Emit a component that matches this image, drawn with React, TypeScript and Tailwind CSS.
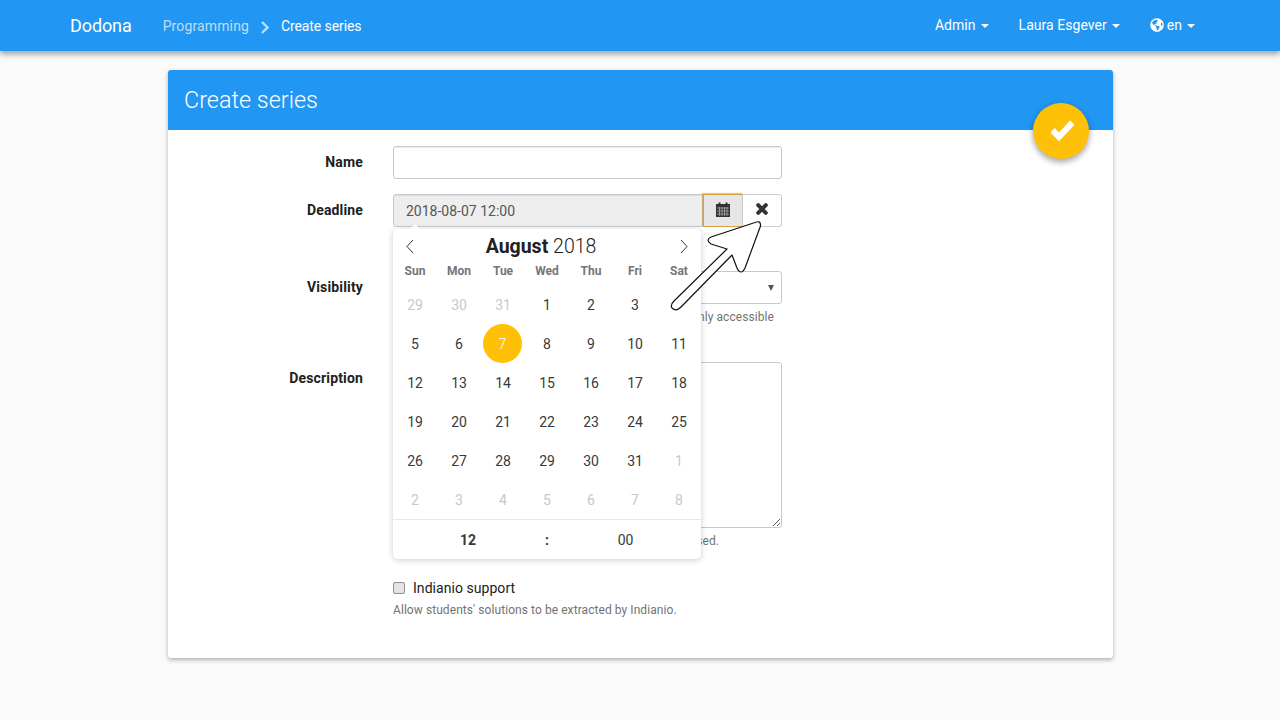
import React from "react";
import { FaGlobeAmericas } from "react-icons/fa";

const Caret = () => (
  <span className="ml-[5px] inline-block w-0 h-0 border-x-[4px] border-t-[4px] border-x-transparent border-t-white align-middle" />
);

const weeks = [
  [[29, 1], [30, 1], [31, 1], [1], [2], [3], [4, 3]],
  [[5], [6], [7, 2], [8], [9], [10], [11]],
  [[12], [13], [14], [15], [16], [17], [18]],
  [[19], [20], [21], [22], [23], [24], [25]],
  [[26], [27], [28], [29], [30], [31], [1, 1]],
  [[2, 1], [3, 1], [4, 1], [5, 1], [6, 1], [7, 1], [8, 1]],
];

function Calendar() {
  return (
    <div className="absolute left-0 top-[35px] z-10 w-[308px] h-[330px] bg-white rounded-[5px] shadow-[0_1px_6px_rgba(0,0,0,0.2)] flex flex-col">
      <div className="absolute -top-[5px] left-[17px] w-0 h-0 border-x-[5px] border-b-[5px] border-x-transparent border-b-white" />
      <div className="h-[34px] flex items-center justify-between px-[10px] text-[#212121]">
        <svg width="14" height="14" viewBox="0 0 14 14" fill="none" stroke="#333" strokeWidth="1">
          <path d="M10 1 L4 7.5 L10 14" />
        </svg>
        <div className="text-[19.5px] leading-[36px] pt-[1px] mr-[12px]">
          <span className="font-bold">August</span> <span className="font-light">2018</span>
        </div>
        <svg width="14" height="14" viewBox="0 0 14 14" fill="none" stroke="#333" strokeWidth="1">
          <path d="M4 1 L10 7.5 L4 14" />
        </svg>
      </div>
      <div className="grid grid-cols-7 h-[18px] text-[12px] leading-[16px] font-bold text-[#757575] text-center">
        {["Sun", "Mon", "Tue", "Wed", "Thu", "Fri", "Sat"].map((d) => (
          <div key={d}>{d}</div>
        ))}
      </div>
      <div className="grid grid-cols-7 pt-[4px] text-[14px] text-center">
        {weeks.flat().map(([n, kind], i) => (
          <div key={i} className="h-[39px] flex items-center justify-center">
            <span
              className={
                kind === 2
                  ? "w-[39px] h-[39px] mr-[1px] pt-[2px] rounded-full bg-[#ffc107] text-white font-light flex items-center justify-center"
                  : kind === 1
                    ? "pt-[2px] text-[#c8c8c8]"
                    : kind === 3
                      ? "pt-[2px] text-transparent"
                      : "pt-[2px] text-[#393939]"
              }
            >
              {n}
            </span>
          </div>
        ))}
      </div>
      <div className="h-[40px] pt-[2px] border-t border-[#e6e6e6] grid grid-cols-[1fr_6px_1fr] text-[14px] text-[#393939] items-center text-center">
        <span className="font-bold pr-[1px]">12</span>
        <span className="font-bold">:</span>
        <span>00</span>
      </div>
    </div>
  );
}

function Row({ label, className, children }: { label?: string; className?: string; children: React.ReactNode }) {
  return (
    <div className={"grid grid-cols-[195px_389px] gap-x-[30px] " + (className ?? "")}>
      <div className="text-right text-[14px] font-bold tracking-[0.15px] leading-[20px] pt-[6px] text-[#212121]">{label}</div>
      <div className="relative">{children}</div>
    </div>
  );
}

export default function App() {
  return (
    <div className="min-h-[720px] bg-[#fafafa] font-['Roboto',sans-serif] relative overflow-hidden">
      <nav className="relative h-[51px] bg-[#2196f3] shadow-[0_3px_6px_rgba(0,0,0,0.16),0_3px_6px_rgba(0,0,0,0.23)] flex items-center pl-[70px] pr-[85px] text-white text-[14px]">
        <span className="text-[18px] mr-[31px] tracking-[-0.1px]">Dodona</span>
        <span className="text-white/70 tracking-[0.13px] mt-[2px]">Programming</span>
        <svg className="ml-[12px] mr-[12px] mt-[3px]" width="8" height="13" viewBox="0 0 8 13" fill="none" stroke="#ffffff" strokeOpacity="0.7" strokeWidth="2.4">
          <path d="M1 1 L6.500 6.500 L1 12" />
        </svg>
        <span className="mt-[2px] tracking-[-0.1px]">Create series</span>
        <div className="ml-auto flex items-center gap-[30px] tracking-[0.04px]">
          <span>Admin<Caret /></span>
          <span>Laura Esgever<Caret /></span>
          <span className="flex items-center">
            <FaGlobeAmericas size={14} className="mr-[3px] -mt-[2px]" />en<Caret />
          </span>
        </div>
      </nav>

      <main className="pt-[19px] flex justify-center">
        <section className="relative w-[945px] h-[588px] bg-white rounded-[3px] shadow-[0_2px_4px_rgba(0,0,0,0.3)] ml-[1px]">
          <header className="h-[60px] pt-[2px] bg-[#2196f3] rounded-t-[3px] px-[16px] flex items-center text-white text-[23.4px] font-light">
            Create series
          </header>
          <button className="absolute right-[24px] top-[33px] w-[56px] h-[56px] rounded-full bg-[#ffc107] shadow-[0_3px_6px_rgba(0,0,0,0.16),0_3px_6px_rgba(0,0,0,0.23)] text-white">
            <svg width="56" height="56" viewBox="0 0 56 56" fill="#ffffff">
              <path d="M17.500 29.500 L21.700 25 L26 29.500 L37 17.500 L41.500 21.700 L26 38.300 Z" />
            </svg>
          </button>

          <div className="pt-[16px]">
            <Row label="Name" className="mb-[15px]">
              <div className="h-[33px] border border-[#c8c8c8] rounded-[3px] bg-white shadow-[inset_0_1px_1px_rgba(0,0,0,0.075)]" />
            </Row>

            <Row label="Deadline" className="mb-[44px]">
              <div className="flex h-[33px]">
                <div className="w-[310px] bg-[#eeeeee] border border-[#c8c8c8] rounded-l-[3px] px-[12px] text-[14px] leading-[33px] text-[#555555] shadow-[inset_0_1px_1px_rgba(0,0,0,0.075)]">
                  2018-08-07 12:00
                </div>
                <div className="w-[40px] bg-[#e6e6e6] border border-[#d69f3f] border-r-[#cccccc] shadow-[-1px_-1px_1px_rgba(214,159,63,0.6)] flex items-center justify-center">
                  <svg className="-mt-[3px]" width="14" height="15" viewBox="0 0 14 15">
                    <path fill="#333333" d="M0 2 H2.500 V0.500 H4.500 V2 H9.500 V0.500 H11.500 V2 H14 V15 H0 Z" />
                    <path stroke="#aaaaaa" strokeWidth="0.8" fill="none" d="M1 6 H13 M1 9 H13 M1 12 H13 M3.500 5 V14 M6 5 V14 M8.500 5 V14 M11 5 V14" />
                  </svg>
                </div>
                <div className="w-[39px] bg-white border border-l-0 border-[#cccccc] rounded-r-[3px] flex items-center justify-center">
                  <svg className="-mt-[3px]" width="12" height="12" viewBox="0 0 12 12" stroke="#333333" strokeWidth="4" strokeLinecap="round">
                    <path d="M2.200 2.200 L9.800 9.800 M9.800 2.200 L2.200 9.800" />
                  </svg>
                </div>
              </div>
              <Calendar />
            </Row>

            <Row label="Visibility" className="mb-[19px]">
              <div className="h-[33px] border border-[#c8c8c8] rounded-[3px] bg-white flex items-center justify-end pr-[7px]">
                <span className="w-0 h-0 border-x-[3.5px] border-t-[6px] border-x-transparent border-t-[#555]" />
              </div>
              <p className="mt-[5px] text-[12px] tracking-[0.07px] leading-[17px] text-[#737373] h-[34px] text-right pr-[8px]">only accessible</p>
            </Row>

            <Row label="Description" className="mb-[18px]">
              <div className="relative h-[166px] border border-[#c8c8c8] rounded-[3px] bg-white">
                <svg className="absolute right-0 bottom-0" width="9" height="9" viewBox="0 0 9 9" stroke="#555" strokeWidth="1">
                  <path d="M1 8 L8 1 M5 8 L8 5" />
                </svg>
              </div>
              <p className="mt-[5px] text-[12px] tracking-[0.07px] leading-[17px] text-[#737373] text-right pr-[63px]">can be used.</p>
            </Row>

            <Row>
              <label className="flex items-center h-[20px] mt-[10px] text-[14px] tracking-[0.05px] text-[#212121]">
                <span className="w-[12px] h-[12px] bg-[#e4e4e4] border border-[#8f8f8f] rounded-[2px] mr-[8px]" />
                Indianio support
              </label>
              <p className="mt-[4px] text-[12px] tracking-[0.07px] leading-[17px] text-[#737373]">Allow students' solutions to be extracted by Indianio.</p>
            </Row>
          </div>
        </section>
      </main>

      <svg className="absolute left-0 top-0 z-20 pointer-events-none" width="1280" height="720" fill="#fff" stroke="#111" strokeWidth="1.2" strokeLinejoin="round">
        <path d="M755 222.500 Q761 220 760.500 226 L745 268 Q741 276 737 268 L732 255 L681 307 Q676 312 672 308 Q670 305 674 301 L727 249 L711 244 Q705 240 711 237 Z" />
      </svg>
    </div>
  );
}
